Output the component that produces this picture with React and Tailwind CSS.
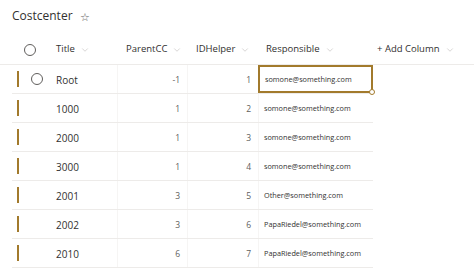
import { ChevronDown } from "lucide-react";

const rows = [
  { title: "Root", parent: "-1", id: "1", resp: "somone@something.com", selected: true },
  { title: "1000", parent: "1", id: "2", resp: "somone@something.com" },
  { title: "2000", parent: "1", id: "3", resp: "somone@something.com" },
  { title: "3000", parent: "1", id: "4", resp: "somone@something.com" },
  { title: "2001", parent: "3", id: "5", resp: "Other@something.com" },
  { title: "2002", parent: "3", id: "6", resp: "PapaRiedel@something.com" },
  { title: "2010", parent: "6", id: "7", resp: "PapaRiedel@something.com" },
];

const cols = "grid grid-cols-[36px_70px_70px_70px_115px]";

function Circle() {
  return <span className="block w-[12px] h-[12px] rounded-full border border-[#605e5c]" />;
}

function Head({ label, className = "" }) {
  return (
    <div className={`flex items-center gap-[5px] text-[9.5px] text-[#323130] ${className}`}>
      {label}
      <ChevronDown className="w-[10px] h-[10px] text-[#b3b0ad]" strokeWidth={1.25} />
    </div>
  );
}

export default function App() {
  return (
    <div className="w-[474px] h-[272px] bg-white overflow-hidden font-['Open_Sans',sans-serif] text-[#323130]">
      <div className="flex items-center gap-[7px] pl-[12px] pt-[8px] h-[24px]">
        <span className="text-[12px] leading-none">Costcenter</span>
        <span className="text-[11px] text-[#605e5c] leading-none">☆</span>
      </div>

      <div className="mt-[6px] pl-[12px] pt-[5px] h-[35px] flex border-b border-[#edebe9]">
        <div className={cols}>
          <div className="flex items-center justify-center">
            <Circle />
          </div>
          <Head label="Title" className="pl-[8px]" />
          <Head label="ParentCC" className="pl-[8px]" />
          <Head label="IDHelper" className="pl-[8px]" />
          <Head label="Responsible" className="pl-[8px]" />
        </div>
        <Head label="+ Add Column" className="pl-[4px]" />
      </div>

      <div className="pl-[12px]">
        {rows.map((r) => (
          <div key={r.title} className={`${cols} h-[29px] w-[361px] border-b border-[#edebe9]`}>
            <div className="flex items-center pl-[5px] gap-[12px]">
              <span className="block w-[2px] h-[16px] bg-[#a27a2c]" />
              {r.selected && <Circle />}
            </div>
            <div className="flex items-center pl-[8px] pt-[2px] text-[10px] border-r border-[#f6f5f4]">{r.title}</div>
            <div className="flex items-center justify-end pr-[7px] pt-[2px] text-[8.5px] text-[#605e5c] border-r border-[#f6f5f4]">
              {r.parent}
            </div>
            <div className="flex items-center justify-end pr-[7px] pt-[2px] text-[8.5px] text-[#605e5c]">{r.id}</div>
            <div
              className={`relative flex items-center pl-[5px] pt-[1px] text-[7.3px] text-[#323130] ${
                r.selected ? "border-2 border-[#a27a2c]" : "border-l border-[#f6f5f4]"
              }`}
            >
              {r.resp}
              {r.selected && (
                <span className="absolute -right-[4px] -bottom-[4px] w-[6px] h-[6px] rounded-full bg-white border border-[#a27a2c]" />
              )}
            </div>
          </div>
        ))}
      </div>
    </div>
  );
}
